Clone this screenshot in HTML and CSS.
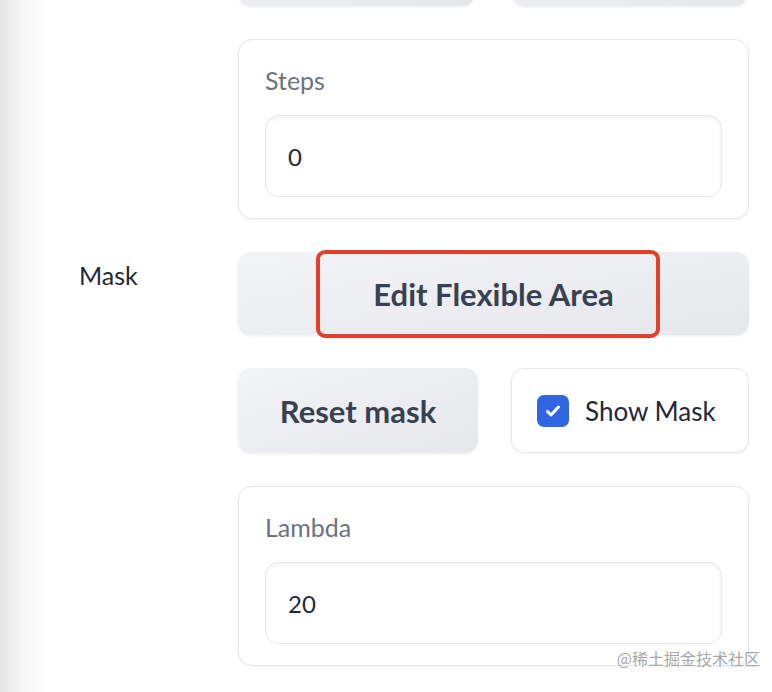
FILE: index.html
```html
<!DOCTYPE html>
<html>
  <head>
    <title>Mask Settings</title>
    <meta charset="utf-8">
    <link rel="stylesheet" href="styles.css">
  </head>
  <body>
    <main class="panel">
      <!-- (A) BUTTONS CUT OFF AT THE TOP -->
      <div class="row">
        <div class="label"></div>
        <div class="pair top-pair">
          <button class="btn"></button>
          <button class="btn"></button>
        </div>
      </div>

      <!-- (B) STEPS -->
      <div class="row">
        <div class="label"></div>
        <div class="card">
          <span class="card-title">Steps</span>
          <input class="num" type="text" value="0">
        </div>
      </div>

      <!-- (C) MASK -->
      <div class="row">
        <div class="label">Mask</div>
        <div class="wide">
          <button class="btn btn-big">Edit Flexible Area</button>
          <span class="mark"></span>
        </div>
      </div>
      <div class="row">
        <div class="label"></div>
        <div class="pair">
          <button class="btn btn-big">Reset mask</button>
          <label class="check">
            <span class="box">
              <svg width="18" height="18" viewBox="0 0 18 18"><path d="M3.5 9.5l3.5 3.5 7.5-8" fill="none" stroke="#fff" stroke-width="3" stroke-linecap="round" stroke-linejoin="round"/></svg>
            </span>
            Show Mask
          </label>
        </div>
      </div>

      <!-- (D) LAMBDA -->
      <div class="row">
        <div class="label"></div>
        <div class="card">
          <span class="card-title">Lambda</span>
          <input class="num" type="text" value="20">
        </div>
      </div>
    </main>
    <div class="watermark">@稀土掘金技术社区</div>
  </body>
</html>
```

FILE: styles.css
```css
* {
  font-family: Lato, "Noto Sans", sans-serif;
  box-sizing: border-box;
}
body {
  margin: 0;
  height: 692px;
  overflow: hidden;
  background: linear-gradient(to right, #e4e4e4 0, #f6f6f6 22px, #fff 48px);
}
.panel {
  display: flex;
  flex-direction: column;
  gap: 33px;
  margin-top: -75px;
}
.row {
  display: grid;
  grid-template-columns: 238px 511px;
}
.label {
  padding: 8px 0 0 79px;
  font-size: 25px;
  color: #1f2937;
}

/* buttons */
.btn {
  border: 0;
  border-radius: 13px;
  color: #374151;
  background: linear-gradient(to bottom right, #f3f4f6, #e5e7eb);
  box-shadow: 0 1px 3px rgba(0, 0, 0, 0.08);
  font-weight: 700;
  cursor: pointer;
}
.btn-big { font-size: 31px; }
.pair {
  display: grid;
  grid-template-columns: 240px 238px;
  gap: 33px;
}
.top-pair { height: 81px; grid-template-columns: 237px 236px; gap: 37px; }
.wide {
  position: relative;
  display: flex;
  height: 83px;
}
.wide .btn { flex: 1; }
.mark {
  position: absolute;
  left: 78px;
  top: -2px;
  width: 344px;
  height: 88px;
  border: 4px solid #e2402b;
  border-radius: 9px;
}

/* checkbox */
.check {
  display: flex;
  align-items: center;
  gap: 16px;
  height: 85px;
  padding-left: 25px;
  border: 1.5px solid #e5e7eb;
  border-radius: 13px;
  background: #fff;
  box-shadow: 0 1px 3px rgba(0, 0, 0, 0.06);
  font-size: 26px;
  color: #1f2937;
}
.box {
  display: flex;
  align-items: center;
  justify-content: center;
  width: 32px;
  height: 32px;
  border-radius: 7px;
  background: #2f65e0;
}

/* cards */
.card {
  display: flex;
  flex-direction: column;
  height: 180px;
  padding: 25px 26px 21px;
  border: 1.5px solid #e5e7eb;
  border-radius: 14px;
  background: #fff;
  box-shadow: 0 1px 3px rgba(0, 0, 0, 0.06);
}
.card-title {
  font-size: 25px;
  color: #6b7280;
}
.num {
  margin-top: auto;
  height: 82px;
  padding: 0 22px;
  border: 1.5px solid #e5e7eb;
  border-radius: 13px;
  background: #fff;
  box-shadow: inset 0 2px 4px rgba(0, 0, 0, 0.05);
  font-size: 24px;
  color: #1f2937;
}

.watermark {
  position: absolute;
  right: 12px;
  bottom: 22px;
  font-size: 16px;
  font-family: "Noto Sans CJK SC", sans-serif;
  color: #a8a8a8;
  text-shadow: 0 0 2px #fff;
}
```
